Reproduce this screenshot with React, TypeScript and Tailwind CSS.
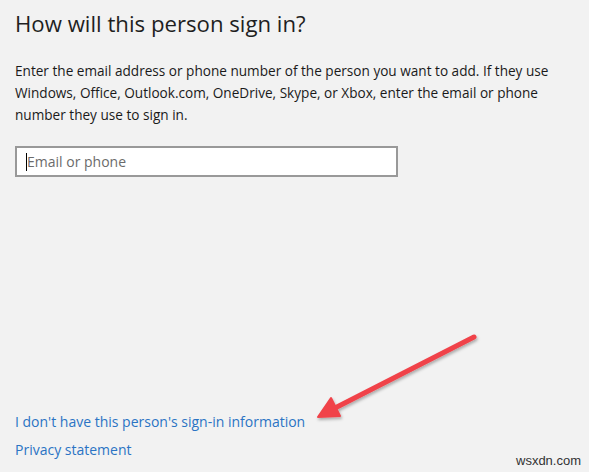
export default function App() {
  return (
    <div
      className="relative flex h-[472px] w-[589px] flex-col overflow-hidden bg-[#f2f2f2] pl-[15px]"
      style={{ fontFamily: '"Open Sans", "Noto Sans", sans-serif' }}
    >
      <h1 className="mt-[8px] text-[22.2px] font-normal leading-[32px] text-[#1f1f1f]">
        How will this person sign in?
      </h1>
      <p className="mt-[20px] w-[560px] text-[13.6px] leading-[22px] text-[#1a1a1a]">
        Enter the email address or phone number of the person you want to add. If they use Windows, Office,
        Outlook.com, OneDrive, Skype, or Xbox, enter the email or phone number they use to sign in.
      </p>
      <div className="mt-[20px] flex h-[31px] w-[383px] items-center border-2 border-[#999999] bg-white pl-[9px]">
        <span className="h-[18px] w-px bg-black" />
        <span className="text-[14px] text-[#6b6b6b]">Email or phone</span>
      </div>
      <div className="mt-auto mb-[11px] flex flex-col gap-[6px] text-[14px] leading-[22px] text-[#2b74c4]">
        <span>I don't have this person's sign-in information</span>
        <span>Privacy statement</span>
      </div>
      <svg className="absolute left-0 top-0" width="589" height="472" viewBox="0 0 589 472">
        <defs>
          <filter id="sh" x="-20%" y="-20%" width="140%" height="140%">
            <feDropShadow dx="1" dy="2" stdDeviation="1.5" floodColor="#000" floodOpacity="0.3" />
          </filter>
        </defs>
        <g filter="url(#sh)" fill="#f0434a" stroke="#f0434a">
          <line x1="474" y1="337" x2="333" y2="409" strokeWidth="5" strokeLinecap="round" />
          <polygon points="318,417 331,398 340,416" strokeWidth="2" strokeLinejoin="round" />
        </g>
      </svg>
      <span
        className="absolute left-[516px] top-[451px] text-[13px] text-[#333]"
        style={{ fontFamily: '"Liberation Sans", sans-serif' }}
      >
        wsxdn.com
      </span>
    </div>
  );
}
